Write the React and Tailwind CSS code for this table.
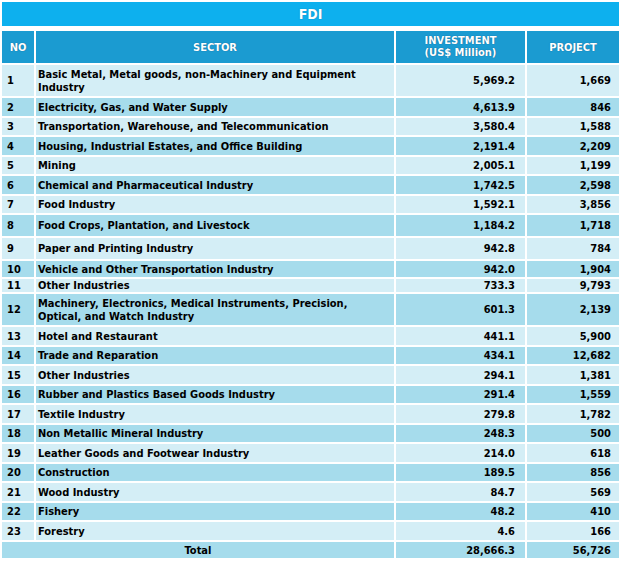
import React from "react";

const rows = [
  ["1", "Basic Metal, Metal goods, non-Machinery and Equipment Industry", "5,969.2", "1,669", 31],
  ["2", "Electricity, Gas, and Water Supply", "4,613.9", "846", 18],
  ["3", "Transportation, Warehouse, and Telecommunication", "3,580.4", "1,588", 17],
  ["4", "Housing, Industrial Estates, and Office Building", "2,191.4", "2,209", 18],
  ["5", "Mining", "2,005.1", "1,199", 17],
  ["6", "Chemical and Pharmaceutical Industry", "1,742.5", "2,598", 18],
  ["7", "Food Industry", "1,592.1", "3,856", 17],
  ["8", "Food Crops, Plantation, and Livestock", "1,184.2", "1,718", 21],
  ["9", "Paper and Printing Industry", "942.8", "784", 21],
  ["10", "Vehicle and Other Transportation Industry", "942.0", "1,904", 16],
  ["11", "Other Industries", "733.3", "9,793", 13],
  ["12", "Machinery, Electronics, Medical Instruments, Precision, Optical, and Watch Industry", "601.3", "2,139", 31],
  ["13", "Hotel and Restaurant", "441.1", "5,900", 18],
  ["14", "Trade and Reparation", "434.1", "12,682", 17],
  ["15", "Other Industries", "294.1", "1,381", 18],
  ["16", "Rubber and Plastics Based Goods Industry", "291.4", "1,559", 17],
  ["17", "Textile Industry", "279.8", "1,782", 18],
  ["18", "Non Metallic Mineral Industry", "248.3", "500", 17],
  ["19", "Leather Goods and Footwear Industry", "214.0", "618", 18],
  ["20", "Construction", "189.5", "856", 17],
  ["21", "Wood Industry", "84.7", "569", 18],
  ["22", "Fishery", "48.2", "410", 17],
  ["23", "Forestry", "4.6", "166", 18],
];

export default function App() {
  return (
    <div className="w-[620px] h-[563px] bg-white pt-[2px] pl-[2px] font-['DejaVu_Sans_Condensed','DejaVu_Sans',sans-serif] font-bold text-[11px] leading-[13px] text-black">
      {/* Title */}
      <div className="w-[617px] h-[24px] bg-[#0db0ee] flex items-center justify-center text-white text-[14px] [text-shadow:0_0_1px_rgba(0,60,100,0.5)]">
        FDI
      </div>

      <div className="mt-[5px] flex flex-col gap-[2px]">
        {/* Header */}
        <div className="flex gap-[2px] h-[32px] text-white text-center [text-shadow:0_0_1px_rgba(0,40,80,0.6)]">
          <div className="w-[32px] bg-[#1b9bd1] flex items-center justify-center">NO</div>
          <div className="w-[358px] bg-[#1b9bd1] flex items-center justify-center">SECTOR</div>
          <div className="w-[129px] bg-[#1b9bd1] flex items-center justify-center leading-[12px]">
            INVESTMENT
            <br />
            (US$ Million)
          </div>
          <div className="w-[92px] bg-[#1b9bd1] flex items-center justify-center">PROJECT</div>
        </div>

        {rows.map(([no, sector, inv, proj, h], i) => {
          const bg = i % 2 === 0 ? "bg-[#d4eef6]" : "bg-[#a6dcec]";
          return (
            <div key={no} className="flex gap-[2px]" style={{ height: h }}>
              <div className={`w-[32px] ${bg} flex items-center pl-[5px]`}>{no}</div>
              <div className={`w-[358px] ${bg} flex items-center pl-[2px] pr-[4px]`}>{sector}</div>
              <div className={`w-[129px] ${bg} flex items-center justify-end pr-[10px]`}>{inv}</div>
              <div className={`w-[92px] ${bg} flex items-center justify-end pr-[8px]`}>{proj}</div>
            </div>
          );
        })}

        {/* Total */}
        <div className="flex gap-[2px] h-[16px]">
          <div className="w-[392px] bg-[#a6dcec] flex items-center justify-center">Total</div>
          <div className="w-[129px] bg-[#a6dcec] flex items-center justify-end pr-[10px]">28,666.3</div>
          <div className="w-[92px] bg-[#a6dcec] flex items-center justify-end pr-[8px]">56,726</div>
        </div>
      </div>
    </div>
  );
}
